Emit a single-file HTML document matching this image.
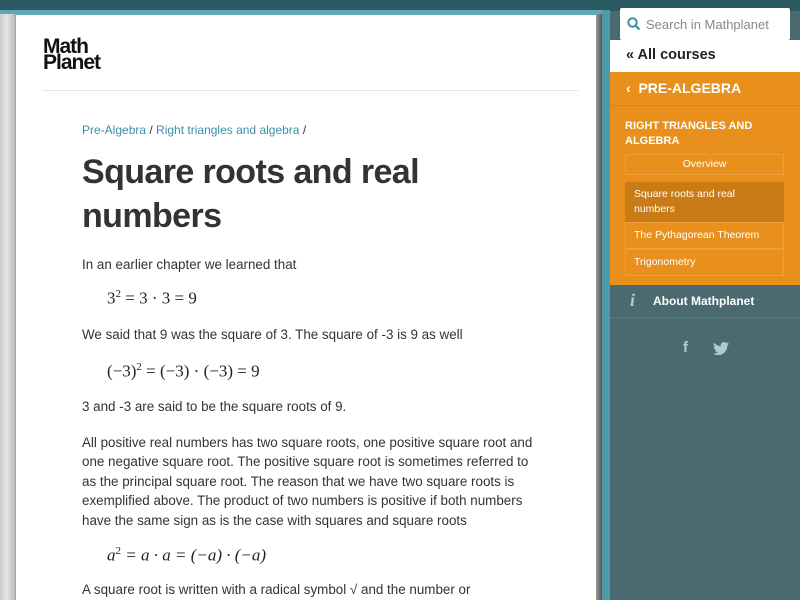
<!DOCTYPE html>
<html><head><meta charset="utf-8"><style>
*{margin:0;padding:0;box-sizing:border-box}
body{width:800px;height:600px;overflow:hidden;background:#3e6f78;font-family:"Liberation Sans",sans-serif;position:relative}
.topbar{position:absolute;left:0;top:0;width:800px;height:11px;background:#2c5a63}
.band{position:absolute;left:0;top:10px;width:610px;height:6px;background:#5fa8b6}
.leftedge{position:absolute;left:0;top:14px;width:16px;height:586px;background:linear-gradient(90deg,#c8c8c8,#e6e6e6 40%,#bdbdbd 90%,#9a9a9a)}
.page{position:absolute;left:16px;top:15px;width:584px;height:585px;background:#fff}
.curl{position:absolute;left:596px;top:14px;width:6px;height:586px;background:linear-gradient(90deg,#999,#555)}
.frame{position:absolute;left:602px;top:10px;width:8px;height:590px;background:#4f9aa8}
.side{position:absolute;left:610px;top:11px;width:190px;height:589px;background:#4a6a70}
.search{position:absolute;left:620px;top:8px;width:170px;height:32px;background:#fff;border-radius:2px;font-size:13px;color:#888;padding:9px 0 0 26px}
.courses{position:absolute;left:610px;top:40px;width:190px;height:32px;background:#fff;font-weight:bold;font-size:14.5px;color:#222;padding:7px 0 0 16px}
.orange{position:absolute;left:610px;top:72px;width:190px;height:213px;background:#e8901b}
.pa{position:absolute;left:16px;top:8px;color:#fff;font-weight:bold;font-size:14px}
.rt{position:absolute;left:15px;top:47px;color:#fff;font-weight:bold;font-size:11px;line-height:15px}
.box{position:absolute;left:15px;width:159px;border:1px solid #eda03a;color:#fff;font-size:10.5px}
.about{position:absolute;left:610px;top:285px;width:190px;height:33px;border-bottom:1px solid #577a80;color:#fff;font-weight:bold;font-size:12px;padding:9px 0 0 43px}
.logo{position:absolute;left:43px;top:39px;font-weight:bold;font-size:21px;line-height:16px;color:#111;letter-spacing:-1px}
.hr{position:absolute;left:42px;top:90px;width:536px;height:1px;background:#e6e6e6}
.c{position:absolute;left:82px;color:#333;font-size:13.4px;line-height:19.4px;width:478px}
.m{position:absolute;left:107px;font-family:"Liberation Serif",serif;font-size:17px;color:#222}
a{color:#3a8fa8;text-decoration:none}
</style></head><body>
<div class="topbar"></div><div class="band"></div>
<div class="leftedge"></div><div class="page"></div><div class="curl"></div><div class="frame"></div>
<div class="side"></div>
<div class="search"><svg style="position:absolute;left:7px;top:9px" width="14" height="14" viewBox="0 0 14 14"><circle cx="5.5" cy="5.5" r="4.2" fill="none" stroke="#3a8fa8" stroke-width="2"/><path d="M8.5 8.5L12.5 12.5" stroke="#3a8fa8" stroke-width="2.2"/></svg>Search in Mathplanet</div>
<div class="courses">« All courses</div>
<div class="orange">
<div class="pa">‹&nbsp; PRE-ALGEBRA</div>
<div style="position:absolute;left:0;top:33px;width:190px;height:1px;background:#d8831a"></div>
<div class="rt">RIGHT TRIANGLES AND<br>ALGEBRA</div>
<div class="box" style="top:82px;height:21px;text-align:center;padding-top:3px">Overview</div>
<div class="box" style="top:110px;height:40px;background:#c97c16;border-color:#c97c16;padding:4px 0 0 8px;line-height:15px">Square roots and real<br>numbers</div>
<div class="box" style="top:150px;height:27px;padding:6px 0 0 8px">The Pythagorean Theorem</div>
<div class="box" style="top:177px;height:27px;padding:6px 0 0 8px">Trigonometry</div>
</div>
<div class="about"><span style="position:absolute;left:20px;top:5px;font-family:'Liberation Serif',serif;font-style:italic;font-size:18px;color:#a8cdd3">i</span>About Mathplanet</div>
<div style="position:absolute;left:683px;top:339px;color:#a8cdd3;font-weight:bold;font-size:15px">f</div>
<svg style="position:absolute;left:713px;top:342px" width="16" height="13" viewBox="0 0 16 13"><path d="M16 1.5c-.6.3-1.2.4-1.9.5.7-.4 1.2-1 1.4-1.8-.6.4-1.3.6-2.1.8C12.8.4 12 0 11 0 9.2 0 7.7 1.5 7.7 3.3c0 .3 0 .5.1.8C5.1 4 2.7 2.7 1.1.7.8 1.2.7 1.8.7 2.4c0 1.1.6 2.1 1.5 2.7-.5 0-1-.2-1.5-.4 0 1.6 1.1 2.9 2.6 3.2-.5.1-1 .2-1.5.1.4 1.300 1.6 2.3 3.1 2.3-1.1.9-2.6 1.4-4.1 1.4H0c1.5.9 3.2 1.5 5 1.5 6 0 9.3-5 9.3-9.3v-.4c.7-.5 1.2-1.1 1.7-1.7z" fill="#a8cdd3"/></svg>
<div class="logo">Math<br>Planet</div>
<div class="hr"></div>
<div class="c" style="top:121px;font-size:12px"><a>Pre-Algebra</a> / <a>Right triangles and algebra</a> /</div>
<div class="c" style="top:150px;font-size:34px;font-weight:bold;line-height:44px;color:#333;letter-spacing:-0.6px">Square roots and real numbers</div>
<div class="c" style="top:255px">In an earlier chapter we learned that</div>
<div class="m" style="top:288px">3<sup style="font-size:11px">2</sup> = 3 · 3 = 9</div>
<div class="c" style="top:325px">We said that 9 was the square of 3. The square of -3 is 9 as well</div>
<div class="m" style="top:361px">(−3)<sup style="font-size:11px">2</sup> = (−3) · (−3) = 9</div>
<div class="c" style="top:397px">3 and -3 are said to be the square roots of 9.</div>
<div class="c" style="top:433px">All positive real numbers has two square roots, one positive square root and<br>one negative square root. The positive square root is sometimes referred to<br>as the principal square root. The reason that we have two square roots is<br>exemplified above. The product of two numbers is positive if both numbers<br>have the same sign as is the case with squares and square roots</div>
<div class="m" style="top:545px;font-style:italic">a<sup style="font-size:11px;font-style:normal">2</sup> = a · a = (−a) · (−a)</div>
<div class="c" style="top:580px">A square root is written with a radical symbol √ and the number or</div>
</body></html>
